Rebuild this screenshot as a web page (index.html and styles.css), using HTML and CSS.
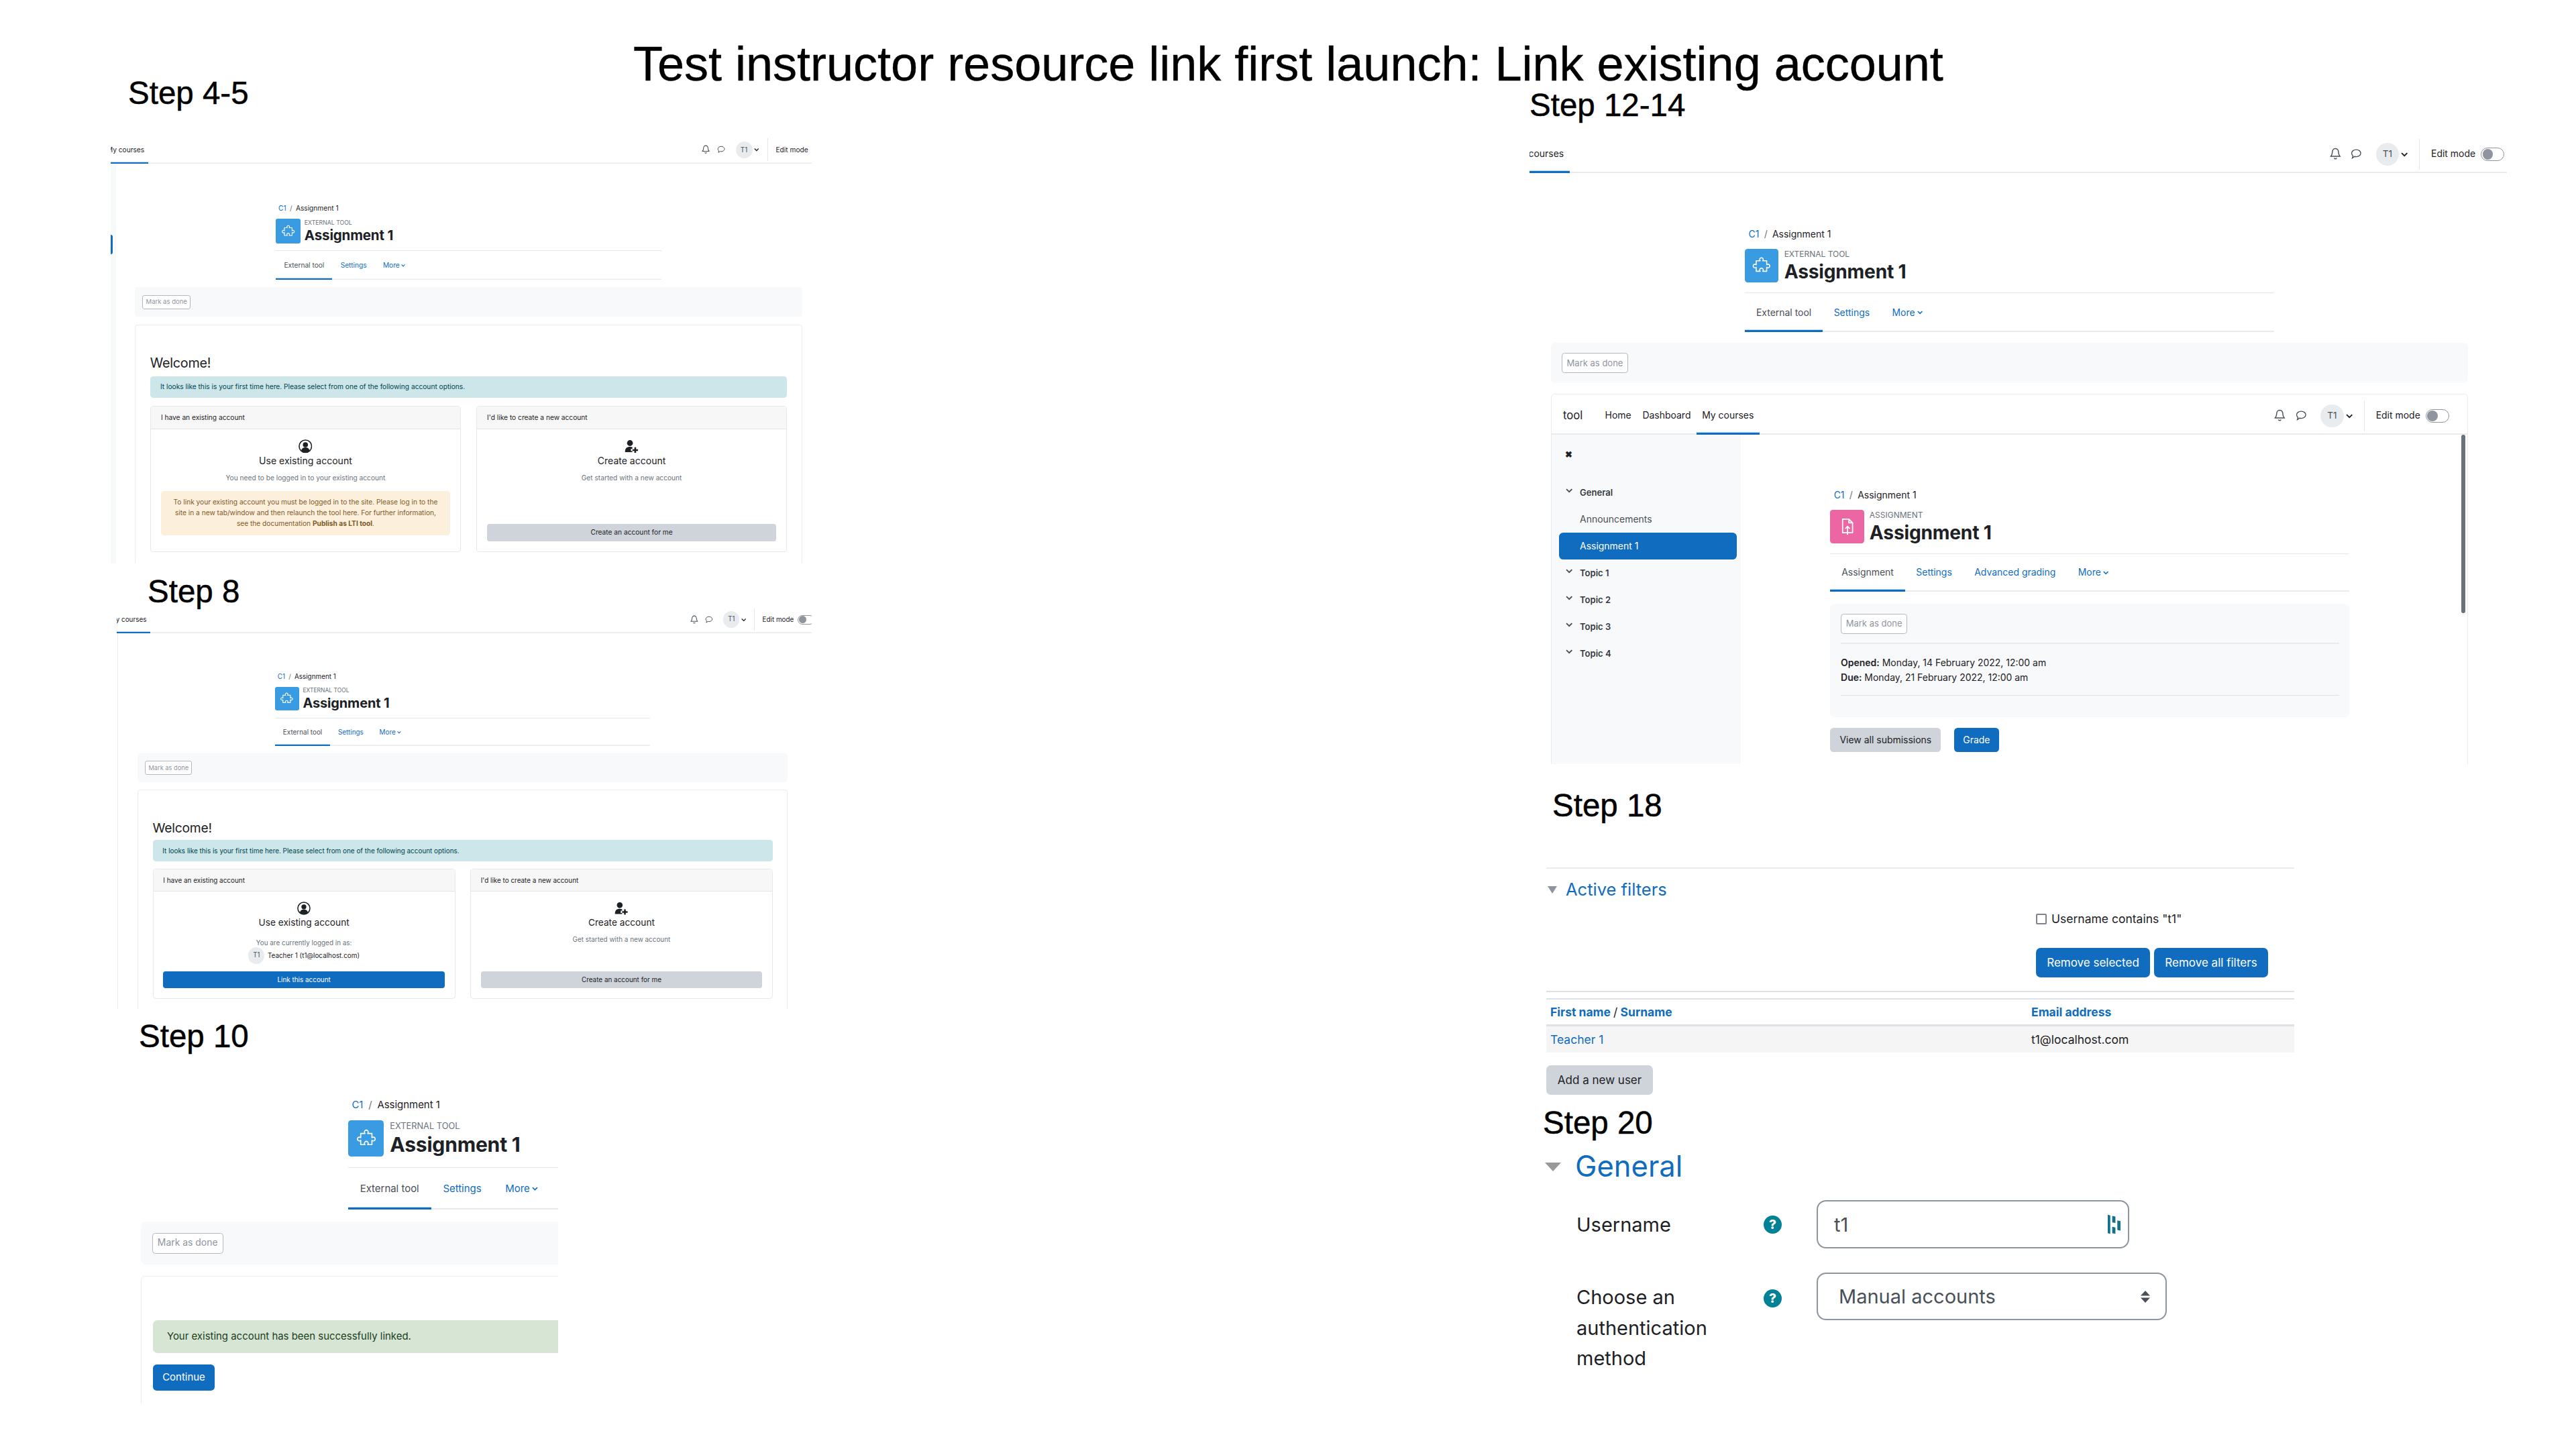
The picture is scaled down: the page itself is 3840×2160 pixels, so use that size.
FILE: index.html
```html
<!DOCTYPE html>
<html lang="en">
<head>
<meta charset="utf-8">
<title>Test instructor resource link first launch: Link existing account</title>
<link rel="stylesheet" href="styles.css">
</head>
<body>
<svg class="sprite" aria-hidden="true">
  <symbol id="puzzle" viewBox="0 0 24 24"><path d="M7 7.500h3.800a1.700 1.700 0 1 1 2.400 0H17v3.800a1.700 1.700 0 1 1 0 2.400v3.800h-3.800a1.700 1.700 0 1 0-2.400 0H7v-3.800a1.700 1.700 0 1 1 0-2.400z" fill="none" stroke="#fff" stroke-width="1" stroke-linejoin="round"/></symbol>
  <symbol id="upload" viewBox="0 0 24 24"><path d="M7.500 5h6l3.500 3.500V18H7.500zM13.500 5v3.500H17" fill="none" stroke="#fff" stroke-width="1.100"/><path d="M12.200 20v-8M10 14.200l2.200-2.200 2.200 2.200" fill="none" stroke="#fff" stroke-width="1.100"/></symbol>
  <symbol id="bell" viewBox="0 0 16 18"><path d="M8 1.500c-3 0-4.400 2.400-4.400 5 0 3.400-1 4.600-2.100 6h13c-1.100-1.400-2.100-2.600-2.100-6 0-2.600-1.400-5-4.400-5zM6.200 14.800a1.900 1.900 0 0 0 3.600 0" fill="none" stroke="#495057" stroke-width="1.400"/></symbol>
  <symbol id="speech" viewBox="0 0 16 18"><path d="M8 3c3.600 0 6.500 2.200 6.500 5s-2.900 5-6.500 5c-.800 0-1.500-.100-2.200-.300L2.500 15l.9-3.200C2.200 10.900 1.500 9.500 1.500 8c0-2.800 2.900-5 6.500-5z" fill="none" stroke="#495057" stroke-width="1.300"/></symbol>
  <symbol id="chev" viewBox="0 0 10 8"><path d="M1 2l4 4 4-4" fill="none" stroke="currentColor" stroke-width="1.800"/></symbol>
  <symbol id="usercircle" viewBox="0 0 28 28"><circle cx="14" cy="14" r="12.700" fill="none" stroke="#1d2125" stroke-width="2.200"/><circle cx="14" cy="11" r="5.200" fill="#1d2125"/><path d="M5.500 23c1-5 4.500-6.500 8.500-6.500s7.500 1.500 8.500 6.500a12.700 12.700 0 0 1-17 0z" fill="#1d2125"/></symbol>
  <symbol id="userplus" viewBox="0 0 28 28"><circle cx="11" cy="7.500" r="6" fill="#1d2125"/><path d="M1 26c0-8 3.500-11 10-11 2 0 3.500.300 5 1v3h-3v5h3v2z" fill="#1d2125"/><path d="M16 20h4v-4h3.500v4h4v3.400h-4v4H20v-4h-4z" fill="#1d2125"/></symbol>
</svg>

<main class="slide">
  <h1 class="title">Test instructor resource link first launch: Link existing account</h1>

  <h2 class="step step-a">Step 4-5</h2>
  <h2 class="step step-b">Step 8</h2>
  <h2 class="step step-c">Step 10</h2>
  <h2 class="step step-d">Step 12-14</h2>
  <h2 class="step step-e">Step 18</h2>
  <h2 class="step step-f">Step 20</h2>

  <!-- Step 4-5 -->
  <section class="shot shot-a">
    <div class="page page-a">
      <div class="nav">
        <a class="nav-tab active tab-a">My courses</a>
        <div class="nav-r nr-a">
          <svg class="ni"><use href="#bell"/></svg>
          <svg class="ni ni2"><use href="#speech"/></svg>
          <span class="avatar av-nav">T1</span>
          <svg class="chev"><use href="#chev"/></svg>
          <span class="divider"></span>
          <span class="edit">Edit mode</span>
          <span class="toggle"><i></i></span>
        </div>
      </div>
      <div class="body">
        <div class="edge edge-a"><span class="edge-mark"></span></div>
        <div class="main main-a">
          <div class="hdr">
            <div class="crumb"><a>C1</a><span class="sl">/</span>Assignment 1</div>
            <div class="head">
              <span class="tile blue"><svg><use href="#puzzle"/></svg></span>
              <div><div class="kind">EXTERNAL TOOL</div><div class="h-title">Assignment 1</div></div>
            </div>
            <div class="tabs">
              <a class="tab active">External tool</a><a class="tab link">Settings</a><a class="tab link">More<svg class="chev-s"><use href="#chev"/></svg></a>
            </div>
          </div>
          <div class="bar"><button class="mark">Mark as done</button></div>
          <div class="box box-w">
            <div class="welcome">Welcome!</div>
            <div class="alert-info">It looks like this is your first time here. Please select from one of the following account options.</div>
            <div class="cards cards-a">
              <article class="card">
                <header class="card-h">I have an existing account</header>
                <div class="card-b">
                  <svg class="ci"><use href="#usercircle"/></svg>
                  <h3 class="ct">Use existing account</h3>
                  <p class="cs">You need to be logged in to your existing account</p>
                  <div class="warn">To link your existing account you must be logged in to the site. Please log in to the site in a new tab/window and then relaunch the tool here. For further information, see the documentation <b>Publish as LTI tool</b>.</div>
                </div>
              </article>
              <article class="card">
                <header class="card-h">I'd like to create a new account</header>
                <div class="card-b">
                  <svg class="ci"><use href="#userplus"/></svg>
                  <h3 class="ct">Create account</h3>
                  <p class="cs">Get started with a new account</p>
                  <button class="btn wide grey">Create an account for me</button>
                </div>
              </article>
            </div>
          </div>
        </div>
      </div>
    </div>
  </section>

  <!-- Step 8 -->
  <section class="shot shot-b">
    <div class="page page-b">
      <div class="nav">
        <a class="nav-tab active tab-b">My courses</a>
        <div class="nav-r nr-b">
          <svg class="ni"><use href="#bell"/></svg>
          <svg class="ni ni2"><use href="#speech"/></svg>
          <span class="avatar av-nav">T1</span>
          <svg class="chev"><use href="#chev"/></svg>
          <span class="divider"></span>
          <span class="edit">Edit mode</span>
          <span class="toggle"><i></i></span>
        </div>
      </div>
      <div class="body">
        <div class="edge edge-b"></div>
        <div class="main main-b">
          <div class="hdr">
            <div class="crumb"><a>C1</a><span class="sl">/</span>Assignment 1</div>
            <div class="head">
              <span class="tile blue"><svg><use href="#puzzle"/></svg></span>
              <div><div class="kind">EXTERNAL TOOL</div><div class="h-title">Assignment 1</div></div>
            </div>
            <div class="tabs">
              <a class="tab active">External tool</a><a class="tab link">Settings</a><a class="tab link">More<svg class="chev-s"><use href="#chev"/></svg></a>
            </div>
          </div>
          <div class="bar"><button class="mark">Mark as done</button></div>
          <div class="box box-w">
            <div class="welcome">Welcome!</div>
            <div class="alert-info">It looks like this is your first time here. Please select from one of the following account options.</div>
            <div class="cards cards-b">
              <article class="card">
                <header class="card-h">I have an existing account</header>
                <div class="card-b">
                  <svg class="ci"><use href="#usercircle"/></svg>
                  <h3 class="ct">Use existing account</h3>
                  <p class="cs cs-login">You are currently logged in as:</p>
                  <div class="who"><span class="avatar">T1</span><span>Teacher 1 (t1@localhost.com)</span></div>
                  <button class="btn wide blue-btn">Link this account</button>
                </div>
              </article>
              <article class="card">
                <header class="card-h">I'd like to create a new account</header>
                <div class="card-b">
                  <svg class="ci"><use href="#userplus"/></svg>
                  <h3 class="ct">Create account</h3>
                  <p class="cs">Get started with a new account</p>
                  <button class="btn wide grey">Create an account for me</button>
                </div>
              </article>
            </div>
          </div>
        </div>
      </div>
    </div>
  </section>

  <!-- Step 10 -->
  <section class="shot shot-c">
    <div class="page page-c">
      <div class="main">
        <div class="hdr">
          <div class="crumb"><a>C1</a><span class="sl">/</span>Assignment 1</div>
          <div class="head">
            <span class="tile blue"><svg><use href="#puzzle"/></svg></span>
            <div><div class="kind">EXTERNAL TOOL</div><div class="h-title">Assignment 1</div></div>
          </div>
          <div class="tabs">
            <a class="tab active">External tool</a><a class="tab link">Settings</a><a class="tab link">More<svg class="chev-s"><use href="#chev"/></svg></a>
          </div>
        </div>
        <div class="bar"><button class="mark">Mark as done</button></div>
        <div class="box box-c">
          <div class="alert-ok">Your existing account has been successfully linked.</div>
          <button class="btn blue-btn cont">Continue</button>
        </div>
      </div>
    </div>
  </section>

  <!-- Step 12-14 -->
  <section class="shot shot-d">
    <div class="page page-d">
      <div class="nav">
        <a class="nav-tab active tab-d">My courses</a>
        <div class="nav-r nr-d">
          <svg class="ni"><use href="#bell"/></svg>
          <svg class="ni ni2"><use href="#speech"/></svg>
          <span class="avatar av-nav">T1</span>
          <svg class="chev"><use href="#chev"/></svg>
          <span class="divider"></span>
          <span class="edit">Edit mode</span>
          <span class="toggle"><i></i></span>
        </div>
      </div>
      <div class="main main-d">
        <div class="hdr">
          <div class="crumb"><a>C1</a><span class="sl">/</span>Assignment 1</div>
          <div class="head">
            <span class="tile blue"><svg><use href="#puzzle"/></svg></span>
            <div><div class="kind">EXTERNAL TOOL</div><div class="h-title">Assignment 1</div></div>
          </div>
          <div class="tabs">
            <a class="tab active">External tool</a><a class="tab link">Settings</a><a class="tab link">More<svg class="chev-s"><use href="#chev"/></svg></a>
          </div>
        </div>
        <div class="bar"><button class="mark">Mark as done</button></div>
        <div class="box box-d">
          <div class="nav">
            <div class="nav-l">
              <span class="brand">tool</span>
              <a class="nav-tab">Home</a><a class="nav-tab">Dashboard</a><a class="nav-tab active">My courses</a>
            </div>
            <div class="nav-r nr-in">
              <svg class="ni"><use href="#bell"/></svg>
              <svg class="ni ni2"><use href="#speech"/></svg>
              <span class="avatar av-nav">T1</span>
              <svg class="chev"><use href="#chev"/></svg>
              <span class="divider"></span>
              <span class="edit">Edit mode</span>
              <span class="toggle"><i></i></span>
            </div>
          </div>
          <div class="split">
            <aside class="side">
              <div class="close">✖</div>
              <div class="si sec"><svg class="chev-t"><use href="#chev"/></svg>General</div>
              <div class="si">Announcements</div>
              <div class="si cur">Assignment 1</div>
              <div class="si sec"><svg class="chev-t"><use href="#chev"/></svg>Topic 1</div>
              <div class="si sec"><svg class="chev-t"><use href="#chev"/></svg>Topic 2</div>
              <div class="si sec"><svg class="chev-t"><use href="#chev"/></svg>Topic 3</div>
              <div class="si sec"><svg class="chev-t"><use href="#chev"/></svg>Topic 4</div>
            </aside>
            <div class="content">
              <div class="hdr hdr-in">
                <div class="crumb"><a>C1</a><span class="sl">/</span>Assignment 1</div>
                <div class="head">
                  <span class="tile pink"><svg><use href="#upload"/></svg></span>
                  <div><div class="kind">ASSIGNMENT</div><div class="h-title">Assignment 1</div></div>
                </div>
                <div class="tabs">
                  <a class="tab active">Assignment</a><a class="tab link">Settings</a><a class="tab link">Advanced grading</a><a class="tab link">More<svg class="chev-s"><use href="#chev"/></svg></a>
                </div>
              </div>
              <div class="info">
                <div class="info-top"><button class="mark">Mark as done</button></div>
                <div class="dates">
                  <div><b>Opened:</b> Monday, 14 February 2022, 12:00 am</div>
                  <div><b>Due:</b> Monday, 21 February 2022, 12:00 am</div>
                </div>
              </div>
              <div class="acts">
                <button class="btn grey view">View all submissions</button>
                <button class="btn blue-btn grade">Grade</button>
              </div>
            </div>
            <span class="scroll"></span>
          </div>
        </div>
      </div>
    </div>
  </section>

  <!-- Step 18 -->
  <section class="shot shot-e">
    <div class="rule"></div>
    <div class="legend"><span class="tri"></span><span>Active filters</span></div>
    <label class="filter"><span class="check"></span>Username contains "t1"</label>
    <div class="filter-btns">
      <button class="btn-e blue-btn">Remove selected</button>
      <button class="btn-e blue-btn">Remove all filters</button>
    </div>
    <div class="rule thin r1"></div>
    <div class="rule thin r2"></div>
    <div class="tbl thead"><div class="cell"><a>First name</a> <span class="slash">/</span> <a>Surname</a></div><div class="cell"><a>Email address</a></div></div>
    <div class="tbl trow"><div class="cell"><a class="plain">Teacher 1</a></div><div class="cell">t1@localhost.com</div></div>
    <button class="btn-e grey add">Add a new user</button>
  </section>

  <!-- Step 20 -->
  <section class="shot shot-f">
    <div class="gen"><span class="tri tri-l"></span><span>General</span></div>
    <div class="row row-1">
      <div class="lab">Username</div>
      <span class="help">?</span>
      <div class="input"><span>t1</span>
        <svg class="pm" viewBox="0 0 22 30"><path d="M1 0l4 1v29l-4-1zM8 2l5 1v10l-5-1zM8 19l5 1v10l-5-1zM16 9l5 1v15l-5-1z" fill="#15708a"/></svg>
      </div>
    </div>
    <div class="row row-2">
      <div class="lab lab-m">Choose an<br>authentication<br>method</div>
      <span class="help help-2">?</span>
      <div class="select"><span>Manual accounts</span>
        <svg class="updown" viewBox="0 0 16 18"><path d="M8 0l7 7.500H1zM8 18l7-7.500H1z" fill="#495057"/></svg>
      </div>
    </div>
  </section>
</main>
</body>
</html>
```
FILE: styles.css
```css
* { box-sizing: border-box; }
html, body { margin: 0; padding: 0; background: #fff; }
body { font-family: Inter, "Noto Sans", sans-serif; color: #1d2125; }
.sprite { display: none; }

.slide { position: relative; width: 3840px; height: 2160px; overflow: hidden; background: #fff; }

.title {
  position: absolute; left: 944px; top: 50px; margin: 0; white-space: nowrap; z-index: 2;
  font: 400 72px/90px "Liberation Sans", Arial, sans-serif; color: #000;
  -webkit-text-stroke: 0.4px #000;
}
.step {
  position: absolute; margin: 0; white-space: nowrap; z-index: 2;
  font: 400 47.5px/56px "Liberation Sans", Arial, sans-serif; color: #000;
  -webkit-text-stroke: 0.5px #000;
}
.step-a { left: 191px; top: 111px; }
.step-b { left: 220px; top: 854px; }
.step-c { left: 207px; top: 1517px; }
.step-d { left: 2280px; top: 129px; }
.step-e { left: 2314px; top: 1173px; }
.step-f { left: 2300px; top: 1646px; }

/* Screenshots placed on the slide */
.shot { position: absolute; overflow: hidden; background: #fff; }
.shot-a { left: 165px; top: 200px; width: 1045px; height: 640px; }
.shot-b { left: 174px; top: 901px; width: 1036px; height: 603px; }
.shot-c { left: 210px; top: 1550px; width: 622px; height: 542px; background: transparent; }
.shot-d { left: 2280px; top: 198px; width: 1457px; height: 941px; }
.shot-e { left: 2305px; top: 1293px; width: 1115px; height: 345px; }
.shot-f { left: 2303px; top: 1716px; width: 930px; height: 340px; }

.page { font-size: 13.4px; line-height: 20px; color: #1d2125; }
.page-a { zoom: 0.76; width: 1375px; }
.page-b { zoom: 0.74; width: 1400px; }
.page-c { zoom: 1.115; width: 1310px; }
.page-d { zoom: 1.043; width: 1397px; }

/* Top navigation */
.nav { display: flex; justify-content: space-between; align-items: center; height: 58px; padding-top: 3px; box-shadow: inset 0 -2px #e9ecef; overflow: hidden; }
.nav-l { display: flex; align-items: center; height: 100%; }
.brand { font-size: 16px; margin: 0 17px 0 16px; width: 35px; }
.nav-tab { display: flex; align-items: center; align-self: stretch; padding: 0 8px; white-space: nowrap; color: #1d2125; }
.nav-tab.active { box-shadow: inset 0 -3px #0f6cbf; }
.tab-a { margin-left: -16px; }
.tab-b { margin-left: -22px; }
.tab-d { margin-left: -33px; }
.nav-r { display: flex; align-items: center; height: 44px; flex: none; }
.nr-a { margin-right: -34px; }
.nr-b { margin-right: -5px; }
.nr-d { margin-right: 4px; }
.nr-in { margin-right: 26px; }
.ni { width: 16px; height: 18px; margin-right: 14px; flex: none; }
.ni2 { margin-right: 20px; }
.avatar { display: inline-flex; align-items: center; justify-content: center; width: 33px; height: 33px; border-radius: 50%; background: #e9ecef; color: #495057; font-size: 13px; flex: none; }
.chev { width: 10px; height: 8px; margin: 0 16px 0 3px; color: #1d2125; flex: none; }
.divider { width: 1px; height: 44px; background: #e3e6e9; flex: none; }
.edit { margin: 0 8px 0 16px; white-space: nowrap; }
.toggle { display: inline-block; width: 33px; height: 19px; border: 1px solid #8f959e; border-radius: 10px; padding: 1px; flex: none; }
.toggle i { display: block; width: 15px; height: 15px; border-radius: 50%; background: #8f959e; }

/* Page body */
.body { display: flex; }
.edge { flex: none; }
.edge-a { width: 10px; height: 800px; background: #f8f9fa; padding-top: 139px; }
.edge-mark { display: block; width: 4px; height: 38px; background: #0f6cbf; border-radius: 0 4px 4px 0; }
.edge-b { width: 2px; height: 800px; border-left: 1px solid #e9ecef; margin-left: 1px; }
.main { width: 1310px; flex: none; }
.main-a { margin-left: 37px; }
.main-b { margin-left: 39px; }
.main-d { margin-left: 31px; }

.hdr { margin-left: 277px; width: 756px; padding-top: 77px; }
.hdr-in { margin-left: 128px; width: 742px; padding-top: 76px; }
.hdr-in .tabs { height: 54px; }
.crumb { height: 20px; padding-left: 5px; white-space: nowrap; }
.crumb a { color: #0f6cbf; }
.sl { margin: 0 7px; color: #6a737b; }
.head { display: flex; gap: 8px; margin-top: 11px; padding-bottom: 12px; border-bottom: 1.5px solid #e4e7ea; }
.tile { width: 48px; height: 48px; border-radius: 4px; display: flex; align-items: center; justify-content: center; flex: none; }
.tile svg { width: 36px; height: 36px; }
.blue { background: #399be2; }
.pink { background: #eb66a2; }
.kind { font-size: 11.500px; line-height: 16px; color: #6a737b; white-space: nowrap; }
.h-title { font-size: 27px; line-height: 34px; font-weight: 700; letter-spacing: -0.2px; white-space: nowrap; }
.tabs { display: flex; height: 56px; box-shadow: inset 0 -2px #e9ecef; }
.tab { display: flex; align-items: center; padding: 0 16px; white-space: nowrap; color: #495057; }
.tab.active { box-shadow: inset 0 -3px #0f6cbf; }
.tab.link { color: #0f6cbf; }
.chev-s { width: 8px; height: 7px; margin-left: 3px; }

.bar { height: 58px; margin-top: 15px; padding: 0 15px; background: #f8f9fa; border-radius: 6px; display: flex; align-items: center; }
.page-c .bar { margin-top: 16px; }
.mark { width: 95px; height: 28px; padding: 0; border: 1.500px solid #b5b9be; border-radius: 4px; background: #fff; color: #8f959e; font: 12.500px/1 Inter, sans-serif; }

.box { margin-top: 15px; border: 1px solid #e9ecef; border-radius: 5px; background: #fff; }
.box-w { padding: 60px 29px 24px; }
.welcome { font-size: 26px; line-height: 30px; letter-spacing: -0.3px; }
.alert-info { height: 43px; margin-top: 10px; padding: 0 20px; display: flex; align-items: center; background: #cce6ea; color: #00434e; border-radius: 6px; }
.cards { display: flex; gap: 30px; margin-top: 15px; }
.card { flex: 1; border: 1px solid #e6e8ea; border-radius: 6px; display: flex; flex-direction: column; overflow: hidden; }
.cards-a .card { height: 287px; }
.cards-b .card { height: 262px; }
.card-h { height: 45px; padding: 0 20px; display: flex; align-items: center; background: #f7f7f7; border-bottom: 1px solid #e3e5e7; }
.card-b { flex: 1; padding: 20px; display: flex; flex-direction: column; align-items: center; text-align: center; }
.ci { width: 27px; height: 27px; flex: none; }
.ct { margin: 2px 0 0; font-size: 18.500px; line-height: 26px; font-weight: 400; white-space: nowrap; }
.cs { margin: 11px 0 0; color: #6a737b; white-space: nowrap; }
.cs-login { margin-top: 18px; }
.who { display: flex; align-items: center; gap: 6px; margin-top: -1px; }
.warn { margin-top: 15px; width: 100%; padding: 12px 20px; background: #fcefdc; color: #7d5a29; border-radius: 6px; line-height: 21px; height: 87px; }
.btn { border: 0; border-radius: 5px; font: inherit; height: 34px; padding: 0; }
.wide { width: 100%; margin-top: auto; height: 34px; }
.grey { background: #ced4da; color: #1d2125; }
.blue-btn { background: #0f6cbf; color: #fff; }

/* Step 10 */
.box-c { padding: 58px 15px 40px; }
.alert-ok { height: 44px; padding: 0 19px; display: flex; align-items: center; width: 700px; background: #d7e5d5; color: #1c3f1a; border-radius: 6px; }
.cont { display: block; margin-top: 15px; width: 83px; height: 35px; }

/* Step 12-14 nested page */
.box-d { height: 600px; overflow: hidden; }
.split { display: flex; position: relative; height: 480px; }
.side { width: 270px; background: #f8f9fa; flex: none; padding-top: 19px; }
.close { height: 20px; padding-left: 19px; font-size: 12px; font-weight: 700; margin-bottom: 24px; }
.si { height: 38.400px; padding-left: 40px; display: flex; align-items: center; position: relative; color: #495057; }
.sec { font-weight: 600; font-size: 12.500px; color: #343a40; }
.cur { margin-left: 10px; width: 254px; padding-left: 30px; height: 38.400px; background: #0f6cbf; color: #fff; border-radius: 6px; }
.chev-t { position: absolute; left: 20px; top: 12px; width: 10px; height: 8px; color: #495057; }
.content { flex: 1; }
.info { margin: 17px 0 0 128px; width: 742px; height: 162px; padding: 15px; background: #f8f9fa; border-radius: 6px; }
.info-top { height: 43px; border-bottom: 2px solid #e9ecef; }
.dates { height: 74px; padding-top: 16px; line-height: 21px; border-bottom: 1px solid #dee2e6; }
.dates b { font-weight: 600; }
.acts { display: flex; gap: 19px; margin: 16px 0 0 128px; }
.view { width: 158px; }
.grade { width: 64px; }
.scroll { position: absolute; right: 3px; top: 0; width: 5px; height: 255px; background: #6a737b; border-radius: 3px; }

/* Step 18 */
.shot-e { font-size: 17.500px; line-height: 24px; }
.rule { height: 2px; background: #e9ecef; }
.legend { display: flex; align-items: center; gap: 13px; height: 30px; margin-top: 16px; padding-left: 2px; font-size: 25.500px; color: #0f6cbf; }
.tri { width: 0; height: 0; border-left: 7px solid transparent; border-right: 7px solid transparent; border-top: 11px solid #8f959e; }
.filter { display: flex; align-items: center; gap: 7px; height: 24px; margin: 17px 0 0 730px; }
.check { width: 16px; height: 16px; border: 2px solid #80838b; border-radius: 2px; background: #fff; }
.filter-btns { display: flex; gap: 6px; margin: 31px 0 0 730px; }
.btn-e { border: 0; border-radius: 7px; height: 44px; width: 170px; padding: 0; font: 17px/1 Inter, sans-serif; }
.rule.thin { height: 2px; background: #dee2e6; }
.r1 { margin-top: 20px; }
.r2 { margin-top: 9px; background: #e9ecef; }
.tbl { display: grid; grid-template-columns: 723px 1fr; align-items: center; }
.cell:first-child { padding-left: 6px; }
.thead { height: 40px; border-bottom: 3px solid #dee2e6; font-weight: 700; }
.thead a { color: #0f6cbf; }
.slash { font-weight: 400; color: #1d2125; }
.trow { height: 39px; background: #f5f5f5; }
.plain { color: #0f6cbf; }
.add { display: block; width: 159px; margin-top: 19px; color: #1d2125; }

/* Step 20 */
.gen { display: flex; align-items: center; gap: 21px; height: 44px; font-size: 43.500px; color: #0f6cbf; }
.tri-l { border-left-width: 12px; border-right-width: 12px; border-top-width: 13px; border-top-color: #999; margin-top: 2px; }
.row { display: flex; font-size: 29px; color: #1d2125; }
.row-1 { margin-top: 29px; align-items: center; }
.row-2 { margin-top: 36px; align-items: flex-start; }
.lab { width: 279px; margin-left: 47px; flex: none; white-space: nowrap; }
.lab-m { line-height: 45.500px; padding-top: 14px; }
.help { width: 27px; height: 27px; border-radius: 50%; background: #008196; color: #fff; font-size: 19px; line-height: 27px; font-weight: 800; text-align: center; flex: none; }
.help-2 { margin-top: 25px; }
.input, .select { margin-left: 52px; border: 2px solid #8f959e; border-radius: 14px; display: flex; align-items: center; justify-content: space-between; color: #495057; flex: none; }
.input { width: 466px; height: 72px; padding: 0 10px 0 24px; }
.select { width: 522px; height: 71px; padding: 0 22px 0 31px; }
.pm { width: 21px; height: 30px; }
.updown { width: 16px; height: 18px; }
```
